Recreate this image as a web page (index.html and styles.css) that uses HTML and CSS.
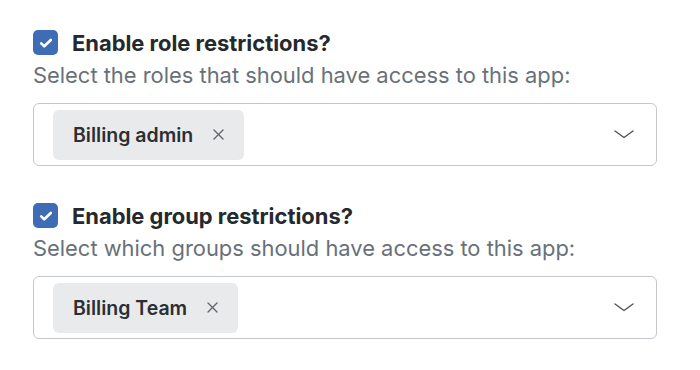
FILE: index.html
```html
<!DOCTYPE html>
<html lang="en">
<head>
    <meta charset="UTF-8">
    <meta name="viewport" content="width=device-width, initial-scale=1.0">
    <title>App access</title>
    <link rel="stylesheet" href="styles.css">
</head>
<body>
    <div class="settings">
        <div class="restriction">
            <label class="toggle">
                <span class="checkbox">
                    <svg width="16" height="16" viewBox="0 0 16 16"><path d="M3.2 8.4l3 2.9L12.8 5" fill="none" stroke="#fff" stroke-width="2.6" stroke-linecap="round" stroke-linejoin="round"/></svg>
                </span>
                <span class="title">Enable role restrictions?</span>
            </label>
            <p class="hint">Select the roles that should have access to this app:</p>
            <div class="select">
                <span class="tag">Billing admin
                    <svg class="remove" width="11" height="11" viewBox="0 0 11 11"><path d="M1 1l9 9M10 1l-9 9" stroke="#62676c" stroke-width="1.4" stroke-linecap="round"/></svg>
                </span>
                <svg class="chevron" width="20" height="9" viewBox="0 0 20 9"><path d="M1 1l9 6.5 9-6.5" fill="none" stroke="#4b5259" stroke-width="1.4" stroke-linecap="round" stroke-linejoin="round"/></svg>
            </div>
        </div>

        <div class="restriction">
            <label class="toggle">
                <span class="checkbox">
                    <svg width="16" height="16" viewBox="0 0 16 16"><path d="M3.2 8.4l3 2.9L12.8 5" fill="none" stroke="#fff" stroke-width="2.6" stroke-linecap="round" stroke-linejoin="round"/></svg>
                </span>
                <span class="title">Enable group restrictions?</span>
            </label>
            <p class="hint">Select which groups should have access to this app:</p>
            <div class="select">
                <span class="tag">Billing Team
                    <svg class="remove" width="11" height="11" viewBox="0 0 11 11"><path d="M1 1l9 9M10 1l-9 9" stroke="#62676c" stroke-width="1.4" stroke-linecap="round"/></svg>
                </span>
                <svg class="chevron" width="20" height="9" viewBox="0 0 20 9"><path d="M1 1l9 6.5 9-6.5" fill="none" stroke="#4b5259" stroke-width="1.4" stroke-linecap="round" stroke-linejoin="round"/></svg>
            </div>
        </div>
    </div>
</body>
</html>
```

FILE: styles.css
```css
body {
    font-family: 'Inter', 'Roboto', sans-serif;
    background-color: #fff;
    margin: 0;
    padding: 30px 43px 0 33px;
}

.settings {
    display: flex;
    flex-direction: column;
    gap: 37px;
}

.toggle {
    display: flex;
    align-items: center;
    gap: 14px;
    height: 25px;
}

.checkbox {
    width: 25px;
    height: 25px;
    border-radius: 5px;
    background-color: #3e6db5;
    display: flex;
    align-items: center;
    justify-content: center;
}

.title {
    font-size: 21.9px;
    font-weight: 700;
    color: #24292e;
}

.hint {
    margin: 6px 0 14px;
    font-size: 21.9px;
    line-height: 28px;
    color: #68717a;
}

.select {
    display: flex;
    align-items: center;
    justify-content: space-between;
    height: 63px;
    box-sizing: border-box;
    border: 1px solid #c4c8cc;
    border-radius: 6px;
    padding: 0 22px 0 19px;
}

.tag {
    display: flex;
    align-items: center;
    gap: 20px;
    height: 50px;
    padding: 0 20px;
    border-radius: 6px;
    background-color: #e9eaec;
    font-size: 19.5px;
    font-weight: 600;
    color: #2b2f33;
}
```
